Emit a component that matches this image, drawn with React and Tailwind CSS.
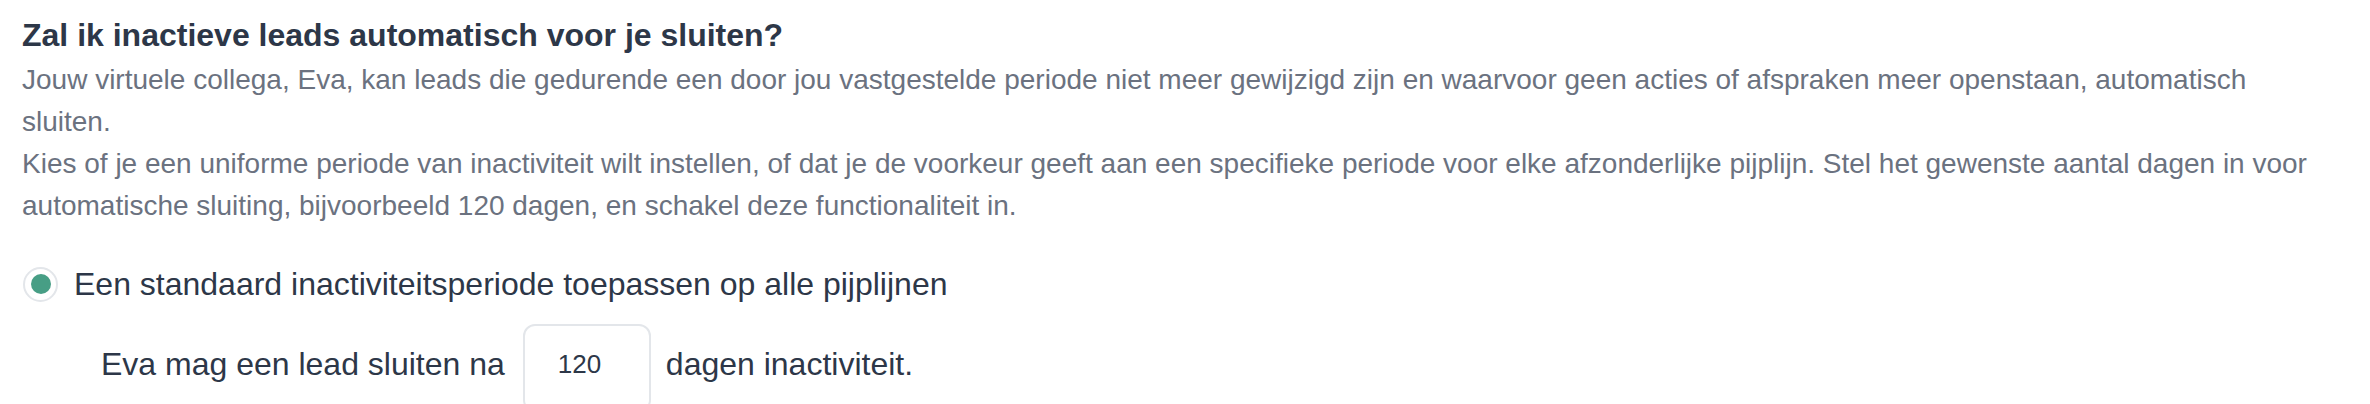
export default function App() {
  return (
    <div
      className="h-[404px] w-full overflow-hidden bg-white pl-[22px] pr-[45px] pt-[17px]"
      style={{ fontFamily: '"Liberation Sans", Arial, Helvetica, sans-serif' }}
    >
      <h2 className="text-[32px] leading-[36px] font-bold text-[#2d3748]">
        Zal ik inactieve leads automatisch voor je sluiten?
      </h2>
      <div className="mt-[6px] text-[28px] leading-[42px] text-[#6b7280]">
        <p>
          Jouw virtuele collega, Eva, kan leads die gedurende een door jou vastgestelde periode niet meer gewijzigd zijn en waarvoor geen acties of afspraken meer openstaan, automatisch sluiten.
        </p>
        <p>
          Kies of je een uniforme periode van inactiviteit wilt instellen, of dat je de voorkeur geeft aan een specifieke periode voor elke afzonderlijke pijplijn. Stel het gewenste aantal dagen in voor automatische sluiting, bijvoorbeeld 120 dagen, en schakel deze functionaliteit in.
        </p>
      </div>

      <label className="mt-[37px] flex items-center gap-[16px] cursor-pointer">
        <span className="ml-[1px] flex h-[35px] w-[35px] items-center justify-center rounded-full border-2 border-[#e3e6ea] bg-white">
          <span className="h-[20px] w-[20px] rounded-full bg-[#479e85]" />
        </span>
        <span className="text-[32px] leading-[40px] text-[#2d3748]">
          Een standaard inactiviteitsperiode toepassen op alle pijplijnen
        </span>
      </label>

      <div className="mt-[20px] ml-[79px] flex items-center text-[32px] leading-[40px] text-[#2d3748]">
        <span>Eva mag een lead sluiten na</span>
        <input
          type="text"
          defaultValue="120"
          className="ml-[18px] mr-[15px] mb-[-8px] h-[88px] w-[128px] rounded-[12px] border-2 border-[#e3e6ea] bg-white pl-[33px] pb-[8px] text-[26px] text-[#2d3748] outline-none"
          style={{ fontFamily: '"Liberation Sans", Arial, Helvetica, sans-serif' }}
        />
        <span>dagen inactiviteit.</span>
      </div>
    </div>
  );
}
